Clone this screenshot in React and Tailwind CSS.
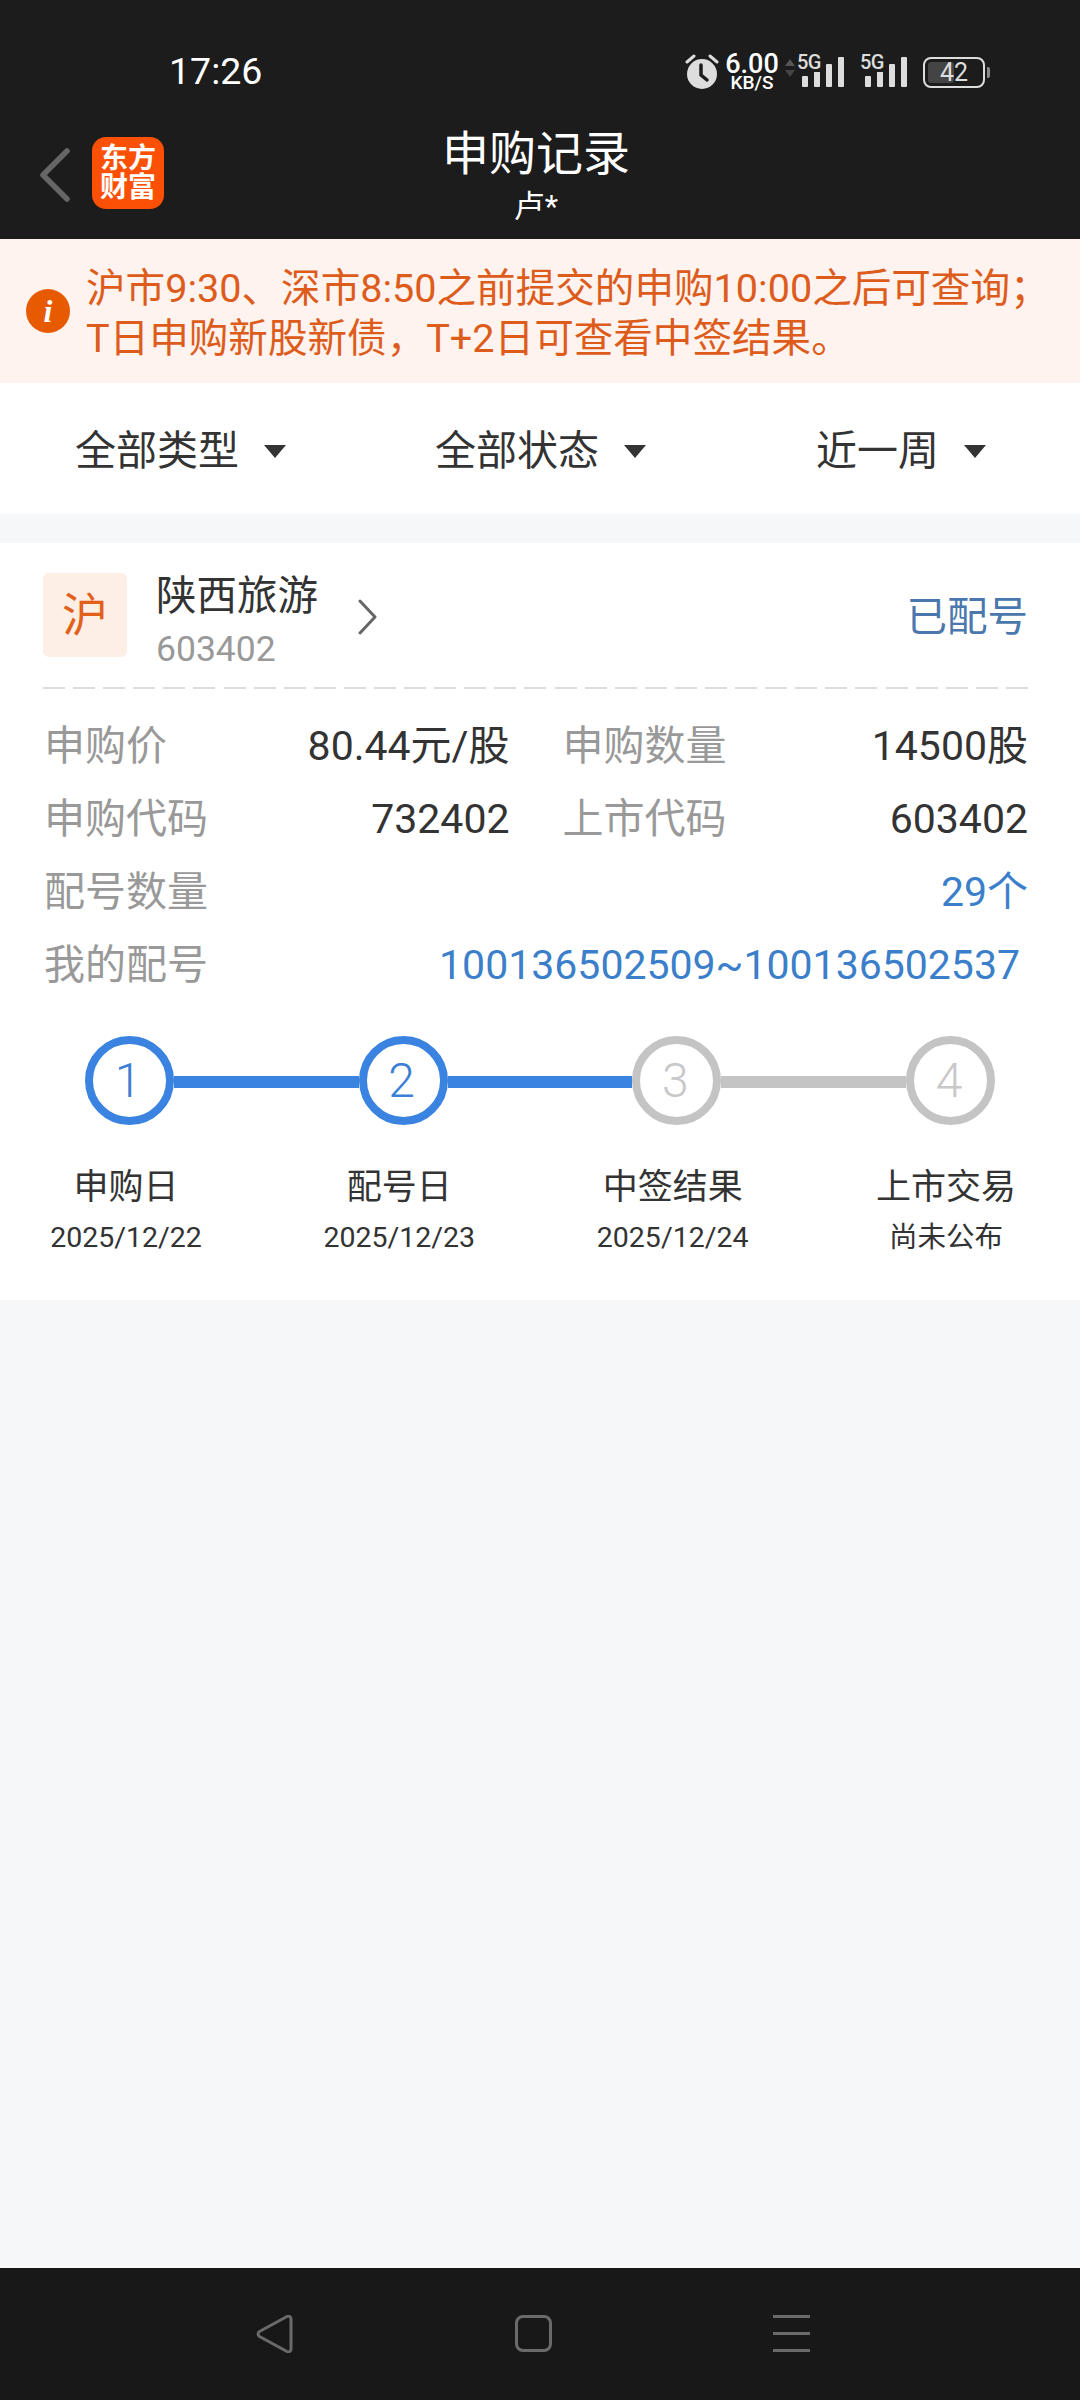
const FONT = "font-['Roboto','Noto_Sans_CJK_SC',sans-serif]";

function Signal() {
  return (
    <div className="relative w-[42px] h-[32px]">
      <span className="absolute left-[-5px] top-[-4px] text-[20px] leading-[20px] font-medium text-[#dddddd] tracking-[-0.5px] bg-[#1c1c1c] pr-[1px] font-['Roboto',sans-serif] z-10">5G</span>
      <svg width="42" height="32" viewBox="0 0 42 32" className="absolute left-0 top-0">
        <rect x="0" y="20" width="6" height="11" rx="1" fill="#dddddd" />
        <rect x="12" y="15" width="6" height="16" rx="1" fill="#dddddd" />
        <rect x="24" y="8" width="6" height="23" rx="1" fill="#dddddd" />
        <rect x="36" y="1" width="6" height="30" rx="1" fill="#dddddd" />
      </svg>
    </div>
  );
}

function StatusBar() {
  return (
    <div className="h-[122px] flex items-center justify-between pl-[169px] pr-[95px] pt-[22px]">
      <span className="text-[37.5px] font-normal text-white font-['Roboto',sans-serif] leading-none">17:26</span>
      <div className="flex items-center">
        <svg width="34" height="36" viewBox="0 0 34 36">
          <circle cx="17" cy="20" r="15" fill="#dddddd" />
          <path d="M16 11v10l6 5" stroke="#1c1c1c" strokeWidth="3.5" fill="none" strokeLinecap="round" />
          <path d="M2 8l7-6M32 8l-7-6" stroke="#dddddd" strokeWidth="3" strokeLinecap="round" />
        </svg>
        <div className="ml-[6px] w-[54px] flex flex-col items-center text-white font-['Roboto',sans-serif] font-medium">
          <span className="text-[27px] leading-[21px]">6.00</span>
          <span className="text-[19px] leading-[16px]">KB/S</span>
        </div>
        <svg width="12" height="18" viewBox="0 0 12 18" className="ml-[5px] mb-[8px]">
          <path d="M6 0l5 7H1z" fill="#555555" />
          <path d="M6 18l5-7H1z" fill="#444444" />
        </svg>
        <div className="ml-[6px]"><Signal /></div>
        <div className="ml-[21px]"><Signal /></div>
        <div className="ml-[16px] relative w-[62px] h-[31px] border-[2px] border-[#dddddd] rounded-[8px] flex items-center justify-center">
          <div className="absolute left-[3px] top-[3px] bottom-[3px] w-[26px] rounded-[3px] bg-[#444444]" />
          <span className="relative text-[25px] leading-none text-[#dddddd] font-['Roboto',sans-serif]">42</span>
          <div className="absolute right-[-7px] top-[8px] w-[3px] h-[11px] bg-[#888888] rounded-r-[2px]" />
        </div>
      </div>
    </div>
  );
}

function TopBar() {
  return (
    <div className="h-[117px] grid grid-cols-[1fr_auto_1fr]">
      <div className="flex items-start pl-[40px] pt-[15px]">
        <svg width="30" height="54" viewBox="0 0 30 54" className="mt-[11px]">
          <path d="M27 3L3 27l24 24" stroke="#666666" strokeWidth="5.5" fill="none" strokeLinecap="round" strokeLinejoin="round" />
        </svg>
        <div className="ml-[22px] w-[72px] h-[72px] rounded-[14px] bg-[#fb5006] flex flex-col items-center justify-center text-white text-[28px] leading-[29px] font-bold">
          <span>东方</span>
          <span>财富</span>
        </div>
      </div>
      <div className="flex flex-col items-center pr-[8px] text-white">
        <span className="text-[47px] leading-[62px] mt-[1px]">申购记录</span>
        <span className="text-[31px] leading-[40px] mt-[2px]">卢*</span>
      </div>
      <div />
    </div>
  );
}

function Notice() {
  return (
    <div className="h-[144px] bg-[#fef3ee] flex items-center pl-[26px] text-[#dd5c1c]">
      <div className="w-[44px] h-[44px] rounded-full bg-[#e85a00] flex items-center justify-center text-white text-[32px] italic font-bold font-['Liberation_Serif',serif] leading-none shrink-0">i</div>
      <div className="ml-[16px] text-[39.6px] leading-[50px] whitespace-nowrap pt-[5px]">
        <div>沪市9:30、深市8:50之前提交的申购10:00之后可查询；</div>
        <div>T日申购新股新债，T+2日可查看中签结果。</div>
      </div>
    </div>
  );
}

function Filter({ label }) {
  return (
    <div className="flex items-center">
      <span className="text-[41px] leading-none text-[#333333]">{label}</span>
      <svg width="22" height="13" viewBox="0 0 22 13" className="ml-[25px]">
        <path d="M0 0h22L11 13z" fill="#333333" />
      </svg>
    </div>
  );
}

function Filters() {
  return (
    <div className="h-[131px] bg-white flex items-center pl-[75px] pt-[6px]">
      <div className="w-[360px]"><Filter label="全部类型" /></div>
      <div className="w-[381px]"><Filter label="全部状态" /></div>
      <Filter label="近一周" />
    </div>
  );
}

function Cell({ label, value }) {
  return (
    <div className="flex-1 flex items-center justify-between">
      <span className="text-[#999999]">{label}</span>
      <span className="text-[#333333]">{value}</span>
    </div>
  );
}

function Step({ n, active }) {
  const cls = active
    ? "border-[#3a83e0] text-[#3a7fd5]"
    : "border-[#c4c4c4] text-[#c8c8c8]";
  return (
    <div className={`w-[89px] h-[89px] rounded-full border-[8px] bg-white shrink-0 flex items-center justify-center text-[48px] leading-none font-['Roboto',sans-serif] font-light pr-[3px] ${cls}`}>
      {n}
    </div>
  );
}

function StepLabel({ title, sub }) {
  return (
    <div className="w-[170px] flex flex-col items-center text-[#333333]">
      <span className="text-[35px] leading-[44px]">{title}</span>
      <span className="text-[28.5px] leading-[40px] mt-[8px]">{sub}</span>
    </div>
  );
}

function Card() {
  return (
    <div className="mt-[29px] h-[757px] bg-white">
      <div className="ml-[43px] mr-[52px] h-[144px]">
        <div className="flex items-start pt-[30px]">
          <div className="w-[84px] h-[84px] rounded-[6px] bg-[#fdeee6] flex items-center justify-center text-[46px] text-[#e2601a]">沪</div>
          <div className="ml-[29px] flex flex-col -mt-[5px]">
            <span className="text-[40.5px] leading-[56px] text-[#333333]">陕西旅游</span>
            <span className="text-[35.5px] leading-[44px] mt-[3px] text-[#999999]">603402</span>
          </div>
          <svg width="22" height="36" viewBox="0 0 22 36" className="ml-[39px] mt-[26px]">
            <path d="M3 2l15 16L3 34" stroke="#666666" strokeWidth="3" fill="none" strokeLinecap="round" strokeLinejoin="round" />
          </svg>
          <span className="ml-auto mt-[20px] text-[40.5px] leading-[48px] text-[#4a78ad]">已配号</span>
        </div>
      </div>
      <div className="ml-[43px] mr-[52px] h-[2px] bg-[repeating-linear-gradient(90deg,#dddddd_0,#dddddd_22px,transparent_22px,transparent_30.09px)]" />
      <div className="ml-[44px] mr-[52px] mt-[21px] text-[41px]">
        <div className="h-[73px] flex items-center gap-[53px]">
          <Cell label="申购价" value="80.44元/股" />
          <Cell label="申购数量" value="14500股" />
        </div>
        <div className="h-[73px] flex items-center gap-[53px]">
          <Cell label="申购代码" value="732402" />
          <Cell label="上市代码" value="603402" />
        </div>
        <div className="h-[73px] flex items-center justify-between">
          <span className="text-[#999999]">配号数量</span>
          <span className="text-[#3b7fcb]">29个</span>
        </div>
        <div className="h-[73px] flex items-center justify-between">
          <span className="text-[#999999]">我的配号</span>
          <span className="text-[#3b7fcb] mr-[8px]">100136502509~100136502537</span>
        </div>
      </div>
      <div className="mt-[34px] pl-[85px] pr-[85px] flex items-center">
        <Step n="1" active />
        <div className="flex-1 h-[12px] bg-[#3a83e0] translate-y-[1px]" />
        <Step n="2" active />
        <div className="flex-1 h-[12px] bg-[#3a83e0] translate-y-[1px]" />
        <Step n="3" />
        <div className="flex-1 h-[12px] bg-[#c4c4c4] translate-y-[1px]" />
        <Step n="4" />
      </div>
      <div className="mt-[41px] pl-[41px] pr-[49px] flex justify-between">
        <StepLabel title="申购日" sub="2025/12/22" />
        <StepLabel title="配号日" sub="2025/12/23" />
        <StepLabel title="中签结果" sub="2025/12/24" />
        <StepLabel title="上市交易" sub="尚未公布" />
      </div>
    </div>
  );
}

function NavBar() {
  return (
    <div className="h-[132px] bg-[#181818] flex items-start justify-between pl-[256px] pr-[270px] pt-[47px]">
      <svg width="38" height="38" viewBox="0 0 38 38">
        <path d="M3.5 16.5L31 1.5c2-1 4 0 4 2.500v30c0 2.500-2 3.500-4 2.500L3.500 21.500c-2-1.500-2-3.500 0-5z" stroke="#6a6a6a" strokeWidth="3" fill="none" strokeLinejoin="round" />
      </svg>
      <div className="w-[37px] h-[37px] rounded-[8px] border-[3px] border-[#6a6a6a]" />
      <div className="w-[37px] h-[37px] flex flex-col justify-between">
        <div className="h-[3px] bg-[#6a6a6a]" />
        <div className="h-[3px] bg-[#6a6a6a]" />
        <div className="h-[3px] bg-[#6a6a6a]" />
      </div>
    </div>
  );
}

export default function App() {
  return (
    <div className={`w-[1080px] h-[2400px] flex flex-col bg-[#f6f7f9] overflow-hidden ${FONT}`}>
      <div className="bg-[#1c1c1c] h-[239px]">
        <StatusBar />
        <TopBar />
      </div>
      <Notice />
      <Filters />
      <Card />
      <div className="flex-1" />
      <NavBar />
    </div>
  );
}
